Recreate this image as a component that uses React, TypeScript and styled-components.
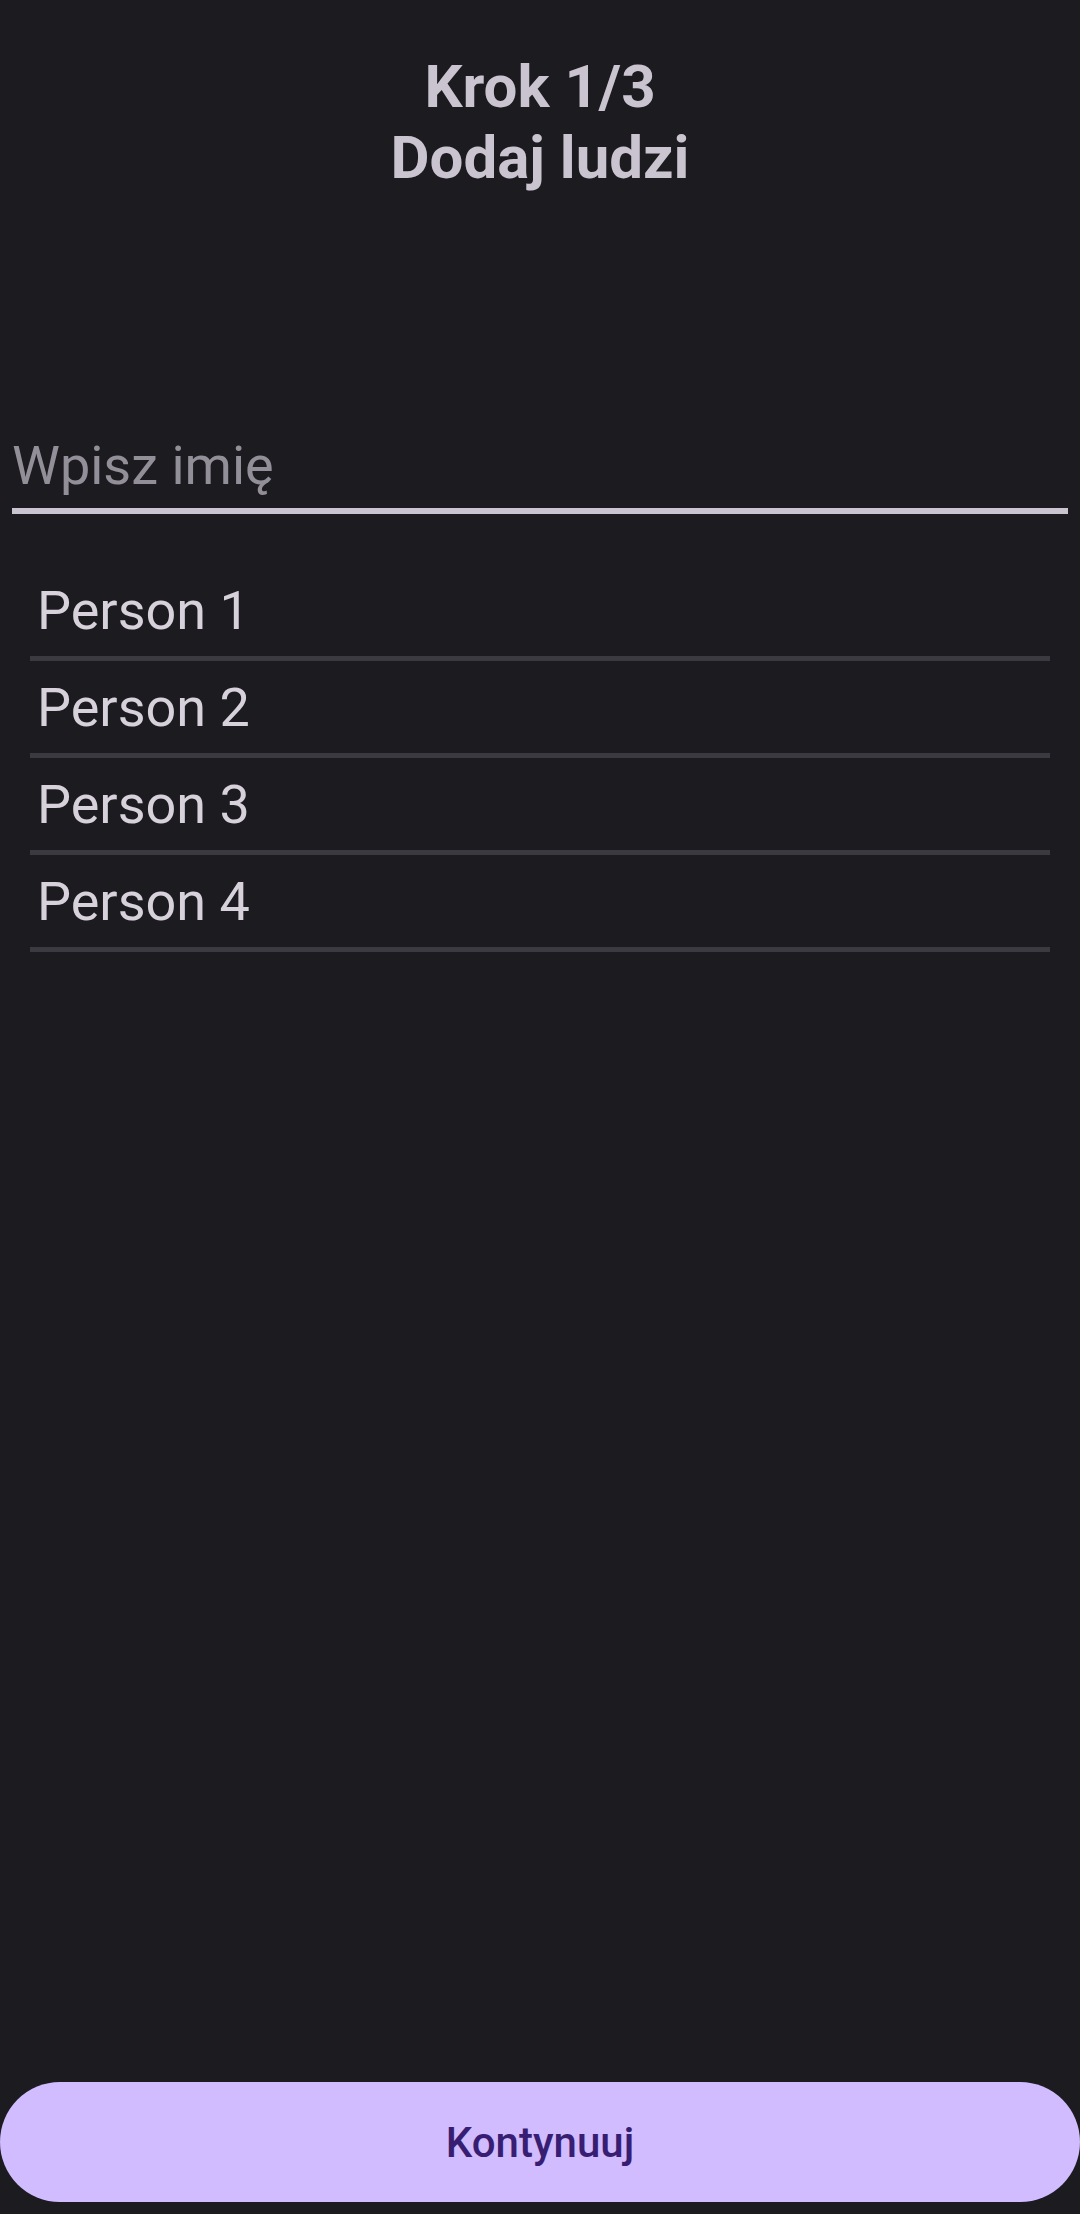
import styled, { createGlobalStyle } from "styled-components";

const GlobalStyle = createGlobalStyle`
  html, body {
    margin: 0;
    padding: 0;
    background-color: #1c1b1f;
  }
  * {
    box-sizing: border-box;
  }
`;

const Screen = styled.div`
  min-height: 2214px;
  display: flex;
  flex-direction: column;
  background-color: #1c1b1f;
  font-family: Roboto, "Noto Sans", sans-serif;
`;

const Header = styled.h1`
  margin: 0;
  padding-top: 51px;
  text-align: center;
  font-size: 60px;
  line-height: 71px;
  font-weight: 700;
  color: #cac4d0;
`;

const NameInput = styled.input`
  display: block;
  margin: 229px 12px 0;
  width: calc(100% - 24px);
  height: 92px;
  padding: 0;
  border: none;
  border-bottom: 6px solid #cac4d0;
  background: transparent;
  outline: none;
  font-family: inherit;
  font-size: 54px;
  color: #e6e1e5;

  &::placeholder {
    color: #938f99;
  }
`;

const PeopleList = styled.ul`
  list-style: none;
  margin: 50px 30px 0;
  padding: 0;
`;

const PersonRow = styled.li`
  padding: 16px 0 14px 7px;
  border-bottom: 5px solid #3b3a40;
  font-size: 54px;
  line-height: 62px;
  color: #d6d1da;
`;

const Spacer = styled.div`
  flex: 1;
`;

const ContinueButton = styled.button`
  display: block;
  width: 100%;
  height: 120px;
  margin-bottom: 12px;
  border: none;
  border-radius: 60px;
  background-color: #d0bcff;
  color: #381e72;
  font-family: inherit;
  font-size: 42px;
  font-weight: 500;
  cursor: pointer;
`;

const people = ["Person 1", "Person 2", "Person 3", "Person 4"];

export default function App() {
  return (
    <>
      <GlobalStyle />
      <Screen>
        <Header>
          Krok 1/3
          <br />
          Dodaj ludzi
        </Header>
        <NameInput placeholder="Wpisz imię" />
        <PeopleList>
          {people.map((name) => (
            <PersonRow key={name}>{name}</PersonRow>
          ))}
        </PeopleList>
        <Spacer />
        <ContinueButton>Kontynuuj</ContinueButton>
      </Screen>
    </>
  );
}
